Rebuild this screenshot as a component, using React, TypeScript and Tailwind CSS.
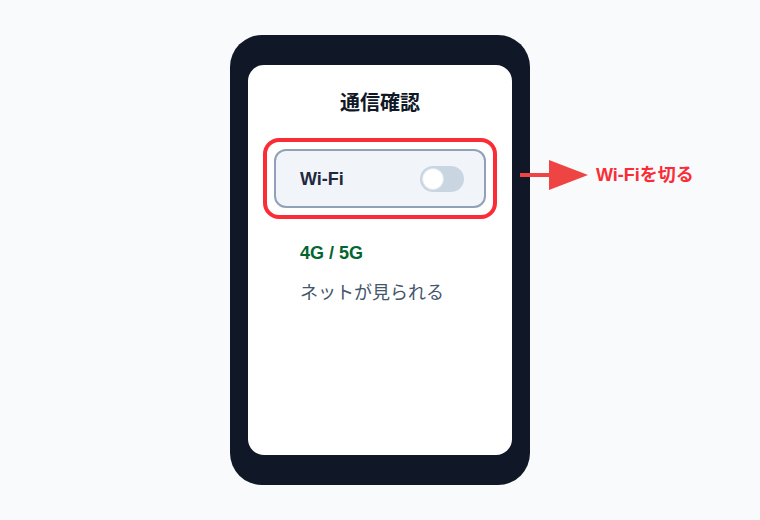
export default function App() {
  return (
    <div
      className="w-[760px] h-[520px] bg-slate-50 flex justify-center pt-[35px]"
      style={{ fontFamily: '"Liberation Sans", "Noto Sans CJK JP", sans-serif' }}
    >
      <div className="relative w-[300px] h-[450px] bg-gray-900 rounded-[32px] px-[18px] py-[30px]">
        <div className="h-full bg-white rounded-2xl px-[15px] pt-[24px]">
          <h1 className="text-center text-[20px] leading-[28px] font-bold text-gray-900">通信確認</h1>

          {/* highlighted row */}
          <div className="mt-[21px] border-4 border-red-500 rounded-2xl p-[7px]">
            <div className="h-[59px] flex items-center justify-between pl-6 pr-5 bg-slate-100 border-2 border-slate-400 rounded-xl">
              <span className="text-lg font-bold text-slate-800">Wi-Fi</span>
              <div className="w-11 h-[26px] rounded-full bg-slate-300 flex items-center px-[2px]">
                <div className="w-[22px] h-[22px] rounded-full bg-white border border-slate-200" />
              </div>
            </div>
          </div>

          <div className="pl-[37px] mt-6">
            <p className="text-lg leading-5 font-bold text-green-800">4G / 5G</p>
            <p className="mt-4 text-[18px] leading-7 text-slate-600">ネットが見られる</p>
          </div>
        </div>

        {/* annotation */}
        <div className="absolute left-[290px] top-[124px] flex items-center gap-[6px]">
          <svg width="70" height="32" viewBox="0 0 70 32">
            <line x1="0" y1="16" x2="40" y2="16" stroke="#ef4444" strokeWidth="4" />
            <polygon points="29,1 68,16 29,31" fill="#ef4444" />
          </svg>
          <span className="text-lg font-bold text-red-500 whitespace-nowrap">Wi-Fiを切る</span>
        </div>
      </div>
    </div>
  );
}
